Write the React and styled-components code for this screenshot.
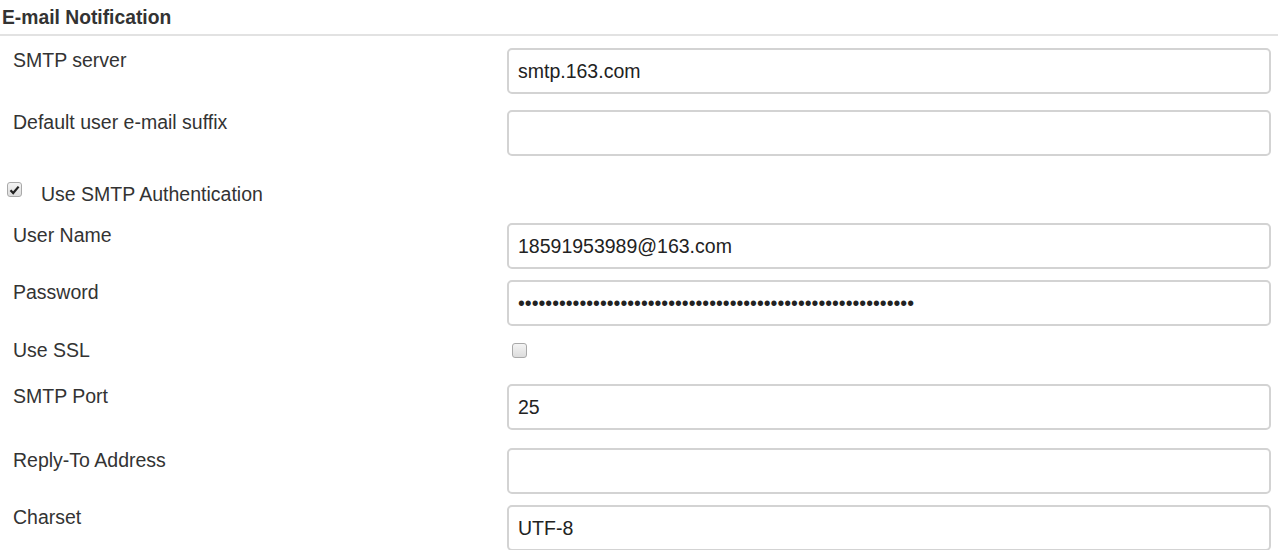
import React from 'react';
import styled, { createGlobalStyle } from 'styled-components';

const Global = createGlobalStyle`
  body {
    margin: 0;
    background: #fff;
    font-family: "Liberation Sans", Arial, Helvetica, sans-serif;
    color: #333;
  }
`

const Section = styled.div`
  width: 1278px;
  height: 550px;
  overflow: hidden;
`

const Heading = styled.div`
  font-size: 19.3px;
  font-weight: bold;
  color: #333;
  padding: 6px 2px 0;
  height: 28px;
  line-height: 24px;
  border-bottom: 2px solid #e2e2e2;
  margin-bottom: 12px;
`

const Row = styled.div`
  display: grid;
  grid-template-columns: 507px 1fr;
  padding-right: 7px;
  margin-bottom: ${props => props.gap}px;
`

const Label = styled.div`
  font-size: 19.5px;
  line-height: 25px;
  padding-left: 13px;
  color: #333;
`

const Field = styled.input`
  box-sizing: border-box;
  width: 100%;
  height: 46px;
  border: 2px solid #d3d3d3;
  border-radius: 5px;
  padding: 0 9px;
  font-family: "Liberation Sans", Arial, Helvetica, sans-serif;
  font-size: 19.5px;
  color: #222;
  background: #fff;
  outline: none;
`

const CheckRow = styled.label`
  display: flex;
  align-items: center;
  height: 30px;
  padding-left: 7px;
  margin-bottom: ${props => props.gap}px;
  font-size: 19.5px;
  color: #333;
`

const Box = styled.span`
  box-sizing: border-box;
  display: inline-flex;
  align-items: center;
  justify-content: center;
  width: 15px;
  height: 15px;
  border: 1px solid #a9a9a9;
  border-radius: 3px;
  background: linear-gradient(#f4f4f4, #dcdcdc);
  margin-top: ${props => props.shift || 0}px;
`

const CheckText = styled.span`
  margin-left: 19px;
  margin-top: 7px;
`

const BoxCell = styled.div`
  padding: 5px 0 0 5px;
  height: 25px;
`

function Check({ checked, shift }) {
  return (
    <Box shift={shift}>
      {checked ? (
        <svg width="11" height="10" viewBox="0 0 11 10">
          <polyline points="1.5,5.2 4.2,8 9.6,1.6" fill="none" stroke="#222" strokeWidth="2.2" />
        </svg>
      ) : null}
    </Box>
  );
}

const fields = [
  { label: 'SMTP server', value: 'smtp.163.com', gap: 16 },
  { label: 'Default user e-mail suffix', value: '', gap: 20 },
];

export default function App() {
  return (
    <Section>
      <Global />
      <Heading>E-mail Notification</Heading>

      {fields.map(f => (
        <Row key={f.label} gap={f.gap}>
          <Label>{f.label}</Label>
          <Field type="text" defaultValue={f.value} />
        </Row>
      ))}

      <CheckRow gap={17}>
        <Check checked shift={-3} />
        <CheckText>Use SMTP Authentication</CheckText>
      </CheckRow>

      <Row gap={11}>
        <Label>User Name</Label>
        <Field type="text" defaultValue="18591953989@163.com" />
      </Row>

      <Row gap={12}>
        <Label>Password</Label>
        <Field type="password" defaultValue={'x'.repeat(58)} />
      </Row>

      <Row gap={16}>
        <Label>Use SSL</Label>
        <BoxCell><Check /></BoxCell>
      </Row>

      <Row gap={18}>
        <Label>SMTP Port</Label>
        <Field type="text" defaultValue="25" />
      </Row>

      <Row gap={11}>
        <Label>Reply-To Address</Label>
        <Field type="text" defaultValue="" />
      </Row>

      <Row gap={0}>
        <Label>Charset</Label>
        <Field type="text" defaultValue="UTF-8" />
      </Row>
    </Section>
  );
}
